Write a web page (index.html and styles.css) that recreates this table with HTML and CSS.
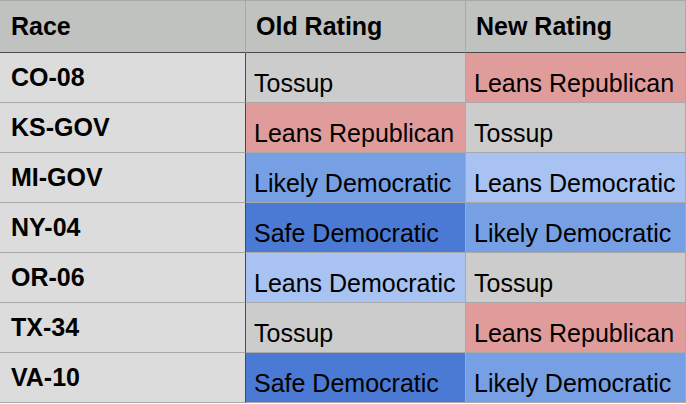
FILE: index.html
```html
<!DOCTYPE html>
<html>
<head>
<meta charset="utf-8">
<link rel="stylesheet" href="styles.css">
</head>
<body>
<div class="table">
  <div class="cell head first">Race</div>
  <div class="cell head">Old Rating</div>
  <div class="cell head">New Rating</div>

  <div class="cell race">CO-08</div>
  <div class="cell data toss">Tossup</div>
  <div class="cell data rep">Leans Republican</div>

  <div class="cell race">KS-GOV</div>
  <div class="cell data rep">Leans Republican</div>
  <div class="cell data toss">Tossup</div>

  <div class="cell race">MI-GOV</div>
  <div class="cell data likely">Likely Democratic</div>
  <div class="cell data leans">Leans Democratic</div>

  <div class="cell race">NY-04</div>
  <div class="cell data safe">Safe Democratic</div>
  <div class="cell data likely">Likely Democratic</div>

  <div class="cell race">OR-06</div>
  <div class="cell data leans">Leans Democratic</div>
  <div class="cell data toss">Tossup</div>

  <div class="cell race">TX-34</div>
  <div class="cell data toss">Tossup</div>
  <div class="cell data rep">Leans Republican</div>

  <div class="cell race last">VA-10</div>
  <div class="cell data safe last">Safe Democratic</div>
  <div class="cell data likely last">Likely Democratic</div>
</div>
</body>
</html>
```

FILE: styles.css
```css
html, body {
  margin: 0;
  padding: 0;
  background: #ffffff;
}

.table {
  display: grid;
  grid-template-columns: 246px 220px 220px;
  grid-template-rows: 53px repeat(7, 50px);
  width: 686px;
  font-family: "Liberation Sans", Arial, Helvetica, sans-serif;
  font-size: 25px;
  color: #000;
}

.cell {
  box-sizing: border-box;
  display: flex;
  align-items: center;
  border-right: 1px solid #a9a9a9;
  border-bottom: 1px solid #a9a9a9;
  white-space: nowrap;
  overflow: hidden;
}

.head {
  background: #c0c2c0;
  font-weight: bold;
  font-size: 25px;
  border-top: 1px solid #a9a9a9;
  border-bottom-color: #484848;
  padding-left: 10px;
}

.head.first {
  padding-left: 11px;
}

.race {
  background: #dcdcdc;
  font-weight: bold;
  font-size: 25px;
  padding-left: 11px;
  border-right-color: #484848;
}

.data {
  padding-left: 8px;
  padding-top: 11px;
}

.toss { background: #cccccc; }
.rep { background: #e09c9b; }
.likely { background: #769fe4; }
.leans { background: #a8c2f1; }
.safe { background: #4a7ad3; }
```
